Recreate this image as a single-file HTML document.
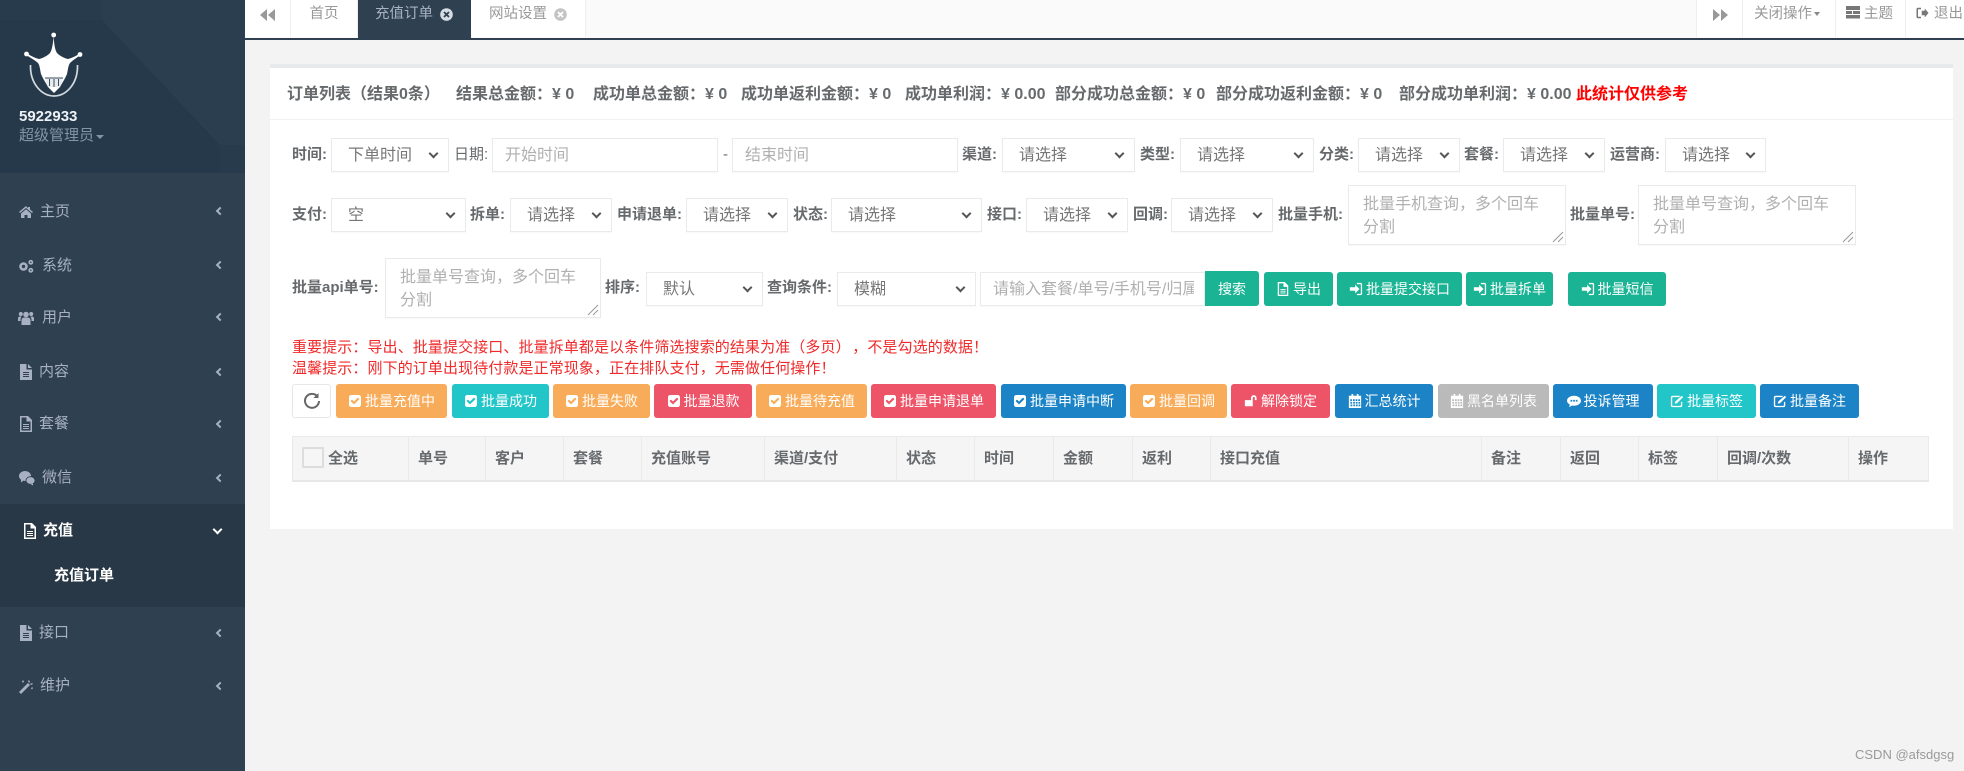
<!DOCTYPE html>
<html lang="zh"><head><meta charset="utf-8"><title>充值订单</title>
<style>
html,body{margin:0;padding:0;width:1964px;height:771px;overflow:hidden;background:#f3f3f4}
body{position:relative;font-family:"Liberation Sans","Noto Sans CJK SC",sans-serif;color:#676a6c}
.a,.l,.s,.i,.t,.b,.th,.m,.ar{position:absolute;white-space:nowrap;box-sizing:border-box}
.l{height:34px;line-height:34px;font-size:15px;font-weight:bold}
.s,.i,.t{background:#fff;border:1px solid #e9eaeb;box-shadow:0 1px 1px rgba(0,0,0,.03);height:34px;line-height:33px;font-size:16px;padding-left:16px;color:#777}
.s:after{content:"";position:absolute;right:11px;top:11px;width:5px;height:5px;border-right:2px solid #555;border-bottom:2px solid #555;transform:rotate(45deg)}
.i{color:#b0b0b0;padding-left:12px;overflow:hidden}
.t{height:60px;white-space:normal;color:#b0b0b0;line-height:23px;padding:7px 14px 0 14px}
.t svg{position:absolute;right:1px;bottom:1px}
.b{top:384px;height:34px;border-radius:3px;color:#fff;font-size:14px;display:flex;align-items:center;justify-content:center;gap:3px}
.b svg{width:14px;height:14px;fill:#fff;flex:none}
.or{background:#f8ac59}.te{background:#23c6c8}.re{background:#ed5468}.bl{background:#1c84c6}.gr{background:#bababa}.gn{background:#1ab394}
.th{top:436px;height:46px;line-height:44px;background:#f5f5f6;border:1px solid #eaeaea;border-left:0;border-bottom:2px solid #e7e7e7;font-size:15px;font-weight:bold;padding-left:9px}
.m{left:0;width:245px;height:30px;line-height:30px;font-size:15px;color:#a7b1c2}
.m svg.ic{position:absolute;left:18px;top:7px;width:16px;height:16px;fill:#a7b1c2}
.m span{position:absolute}
.ar{left:217px;width:6px;height:6px;border-left:2px solid #a7b1c2;border-bottom:2px solid #a7b1c2;transform:rotate(45deg)}
.tab{position:absolute;top:0;height:37px;line-height:29px;font-size:14.5px;color:#999;white-space:nowrap;box-sizing:border-box;text-align:center;border-right:1px solid #eee}
</style></head><body>
<svg width="0" height="0" style="position:absolute"><defs>
<symbol id="ck" viewBox="0 0 1792 1792"><path d="M813 1299l614-614q19-19 19-45t-19-45l-102-102q-19-19-45-19t-45 19l-467 467-211-211q-19-19-45-19t-45 19l-102 102q-19 19-19 45t19 45l358 358q19 19 45 19t45-19zm851-883v960q0 119-84.5 203.5t-203.5 84.5h-960q-119 0-203.5-84.5t-84.5-203.5v-960q0-119 84.5-203.5t203.5-84.5h960q119 0 203.5 84.5t84.5 203.5z"/></symbol>
<symbol id="cal" viewBox="0 0 16 16"><path d="M4 0h2v2h4V0h2v2h3v14H1V2h3zM2.500 6v2h2V6zm3.200 0v2h2V6zm3 0v2h2V6zm3 0v2h2V6zm-9 3v2h2V9zm3.200 0v2h2V9zm3 0v2h2V9zm3 0v2h2V9zm-9 3v2h2v-2zm3.200 0v2h2v-2zm3 0v2h2v-2zm3 0v2h2v-2z" fill-rule="evenodd"/></symbol>
<symbol id="ed" viewBox="0 0 16 16"><path d="M3 2h8v1.500H3.500a1 1 0 0 0-1 1v8a1 1 0 0 0 1 1h8a1 1 0 0 0 1-1V9H14v4a2 2 0 0 1-2 2H3a2 2 0 0 1-2-2V4a2 2 0 0 1 2-2zM13.500 2l1.500 1.500L8 10.500 5.500 11l.5-2.500z"/></symbol>
<symbol id="si" viewBox="0 0 16 16"><path d="M1 6h6V3l5 5-5 5v-3H1zM9 1h4a2 2 0 0 1 2 2v10a2 2 0 0 1-2 2H9v-1.500h4a.5.5 0 0 0 .5-.5V3a.5.5 0 0 0-.5-.5H9z"/></symbol>
<symbol id="fl" viewBox="0 0 16 16"><path fill-rule="evenodd" d="M2 0h8l4 4v12H2zm1.500 1.500v13h9V5.500H8.500v-4zM5 8h6v1H5zm0 2h6v1H5zm0 2h6v1H5z"/></symbol>
<symbol id="fs" viewBox="0 0 16 16"><path fill-rule="evenodd" d="M2 0h6.500v5.500H14V16H2zM5 8v1h6V8zm0 2v1h6v-1zm0 2v1h6v-1zM10 0l4 4h-4z"/></symbol>
</defs></svg>

<!-- sidebar -->
<div class="a" style="left:0;top:0;width:245px;height:771px;background:#2f4050"></div>
<svg class="a" style="left:0;top:0" width="245" height="173"><rect width="245" height="173" fill="#283b4c"/><polygon points="0,20 102,20 220,145 220,173 0,173" fill="#26394a"/><polygon points="102,0 245,0 245,145 220,145 102,20" fill="#2b3e4f"/></svg>
<svg class="a" style="left:0;top:0" width="110" height="105">
<path d="M30.500 65C30 84 42 96 54 96S78 84 77.500 65" fill="none" stroke="#d3dae0" stroke-width="1.700"/>
<path d="M53.700 36C54 44 55 50 57 53 60 56 64 58 68 59 72 58 76 56 79 54L80 55.500C76 58 72 61 70 63 68 66 68 70 67 74 65 79 62 83 60 87L54 93 48 87C46 83 43 79 41 74 40 70 40 66 38 63 36 61 31 58 27 55.500L28 54C31 56 35 58 39 59 43 58 47 56 50 53 52 50 53 44 53.700 36Z" fill="#fff"/>
<path d="M45 78H63L60 87H48Z" fill="#e8ecef"/>
<path d="M45 78H63M49.500 79V86M54 79V87M58.500 79V86" stroke="#3a4d5e" stroke-width="1" fill="none"/>
<circle cx="53.700" cy="35" r="2.400" fill="#fff"/><circle cx="26.500" cy="54" r="2.400" fill="#fff"/><circle cx="80" cy="54.500" r="2.400" fill="#fff"/>
</svg>
<div class="a" style="left:19px;top:107px;font-size:15px;font-weight:bold;color:#eef2f6;line-height:20px">5922933</div>
<div class="a" style="left:19px;top:126px;font-size:15px;color:#8095a8;line-height:20px">超级管理员</div>
<div class="a" style="left:96px;top:135px;border:4.500px solid transparent;border-top:4.500px solid #8095a8;border-bottom:0"></div>

<div class="m" style="top:197px"><svg class="ic" viewBox="0 0 16 16"><path d="M8 2 1 8l1 1 6-5 6 5 1-1-3-2.500V3h-2v1.200zM3 9.500V14h3.500v-3h3v3H13V9.500L8 5.300z"/></svg><span style="left:40px">主页</span></div><div class="ar" style="top:208px"></div>
<div class="m" style="top:251px"><svg class="ic" viewBox="0 0 16 16" style="fill:none;stroke:#a7b1c2"><circle cx="5.500" cy="8.500" r="3" stroke-width="2.600"/><circle cx="12.800" cy="4.300" r="1.600" stroke-width="1.700"/><circle cx="12.800" cy="12.300" r="1.600" stroke-width="1.700"/></svg><span style="left:42px">系统</span></div><div class="ar" style="top:262px"></div>
<div class="m" style="top:303px"><svg class="ic" viewBox="0 0 16 16"><circle cx="8" cy="4.500" r="2.800"/><circle cx="2.800" cy="4" r="2"/><circle cx="13.200" cy="4" r="2"/><path d="M3.500 15V10a3 3 0 0 1 3-2.500h3a3 3 0 0 1 3 2.500v5zM0 11V8.500A2 2 0 0 1 2 6.500h1.500L2.500 9v2zM16 11V8.500a2 2 0 0 0-2-2h-1.500l1 2.500v2z"/></svg><span style="left:42px">用户</span></div><div class="ar" style="top:314px"></div>
<div class="m" style="top:357px"><svg class="ic"><use href="#fs"/></svg><span style="left:39px">内容</span></div><div class="ar" style="top:369px"></div>
<div class="m" style="top:409px"><svg class="ic"><use href="#fl"/></svg><span style="left:39px">套餐</span></div><div class="ar" style="top:421px"></div>
<div class="m" style="top:463px"><svg class="ic" viewBox="0 0 16 16" style="width:18px"><ellipse cx="6" cy="6" rx="6" ry="5"/><path d="M2 9v3.500L5 10z"/><ellipse cx="11.500" cy="10.500" rx="4.500" ry="3.800" stroke="#2f4050" stroke-width=".8"/><path d="M14 13.500V15.500L11.500 14z"/></svg><span style="left:42px">微信</span></div><div class="ar" style="top:475px"></div>
<div class="a" style="left:0;top:504px;width:245px;height:103px;background:#293846"></div>
<div class="m" style="top:516px;color:#fff;font-weight:bold"><svg class="ic" style="left:22px;fill:#fff"><use href="#fl"/></svg><span style="left:43px">充值</span></div>
<div class="ar" style="left:214px;top:526px;width:7px;height:7px;border-color:#fff;transform:rotate(-45deg)"></div>
<div class="m" style="top:561px;color:#fff;font-weight:bold"><span style="left:54px">充值订单</span></div>
<div class="m" style="top:618px"><svg class="ic"><use href="#fs"/></svg><span style="left:39px">接口</span></div><div class="ar" style="top:630px"></div>
<div class="m" style="top:671px"><svg class="ic" viewBox="0 0 16 16"><path d="M1 14 10 5l2 2-9 9zM11 2l1 2-1 1-1-2zM14 5l1 1-2 1-1-1zM5 2l1 1.500L5 5 4 3.500zM14 9l1 1-1 1.500-1-1z"/></svg><span style="left:40px">维护</span></div><div class="ar" style="top:683px"></div>

<!-- top bar -->
<div class="a" style="left:245px;top:0;width:1719px;height:38px;background:#fafafa"></div>
<div class="a" style="left:245px;top:38px;width:1719px;height:2px;background:#2f4050"></div>
<div class="tab" style="left:245px;width:46px;background:#fff;border-right:1px solid #eee"><svg width="16" height="12" viewBox="0 0 16 12" style="margin-top:9px" fill="#999"><path d="M7 0V12L0 6zM15 0V12L8 6z"/></svg></div>
<div class="tab" style="left:291px;width:67px;background:#fff">首页</div>
<div class="tab" style="left:358px;width:113px;height:38px;background:#2f4050;color:#a7b1c2;border:0;text-align:left;padding-left:17px">充值订单<svg width="13" height="13" viewBox="0 0 13 13" style="position:absolute;left:82px;top:8px"><circle cx="6.500" cy="6.500" r="6.300" fill="#d5dbe2"/><path d="M4 4l5 5M9 4l-5 5" stroke="#2f4050" stroke-width="1.800"/></svg></div>
<div class="tab" style="left:471px;width:115px;background:#fff;text-align:left;padding-left:18px">网站设置<svg width="13" height="13" viewBox="0 0 13 13" style="position:absolute;left:83px;top:8px"><circle cx="6.500" cy="6.500" r="6.300" fill="#c4c4c4"/><path d="M4 4l5 5M9 4l-5 5" stroke="#fff" stroke-width="1.800"/></svg></div>
<div class="tab" style="left:1696px;width:47px;background:#fff;border-left:1px solid #eee"><svg width="16" height="12" viewBox="0 0 16 12" style="margin-top:9px" fill="#999"><path d="M1 0V12L8 6zM9 0V12L16 6z"/></svg></div>
<div class="tab" style="left:1743px;width:93px;background:#fff;text-align:left;padding-left:11px">关闭操作<span style="display:inline-block;border:3.500px solid transparent;border-top:4px solid #888;border-bottom:0;margin:0 0 2px 2px"></span></div>
<div class="tab" style="left:1836px;width:70px;background:#fff;text-align:left;padding-left:10px"><svg width="14" height="13" viewBox="0 0 14 13" fill="#777" style="vertical-align:-1px;margin-right:4px"><path d="M0 0h14v4H0zM0 5h6v3H0zM7 5h7v3H7zM0 9h14v3.500H0z"/></svg>主题</div>
<div class="tab" style="left:1906px;width:58px;background:#fff;text-align:left;padding-left:10px;border:0"><svg width="13" height="12" viewBox="0 0 16 16" fill="#777" style="vertical-align:-1px;margin-right:5px"><path d="M6 1H2a2 2 0 0 0-2 2v10a2 2 0 0 0 2 2h4v-2H2V3h4zM7 5h4V2l5 6-5 6v-3H7z"/></svg>退出</div>

<!-- card -->
<div class="a" style="left:270px;top:64px;width:1683px;height:465px;background:#fff;border-top:4px solid #e7eaec;box-sizing:border-box"></div>
<div class="a" style="left:270px;top:119px;width:1683px;height:1px;background:#f0f1f2"></div>
<div style="font-size:16px;font-weight:bold">
<div class="a" style="left:287px;top:80px">订单列表（结果0条）</div>
<div class="a" style="left:456px;top:80px">结果总金额：¥ 0</div>
<div class="a" style="left:593px;top:80px">成功单总金额：¥ 0</div>
<div class="a" style="left:741px;top:80px">成功单返利金额：¥ 0</div>
<div class="a" style="left:905px;top:80px">成功单利润：¥ 0.00</div>
<div class="a" style="left:1055px;top:80px">部分成功总金额：¥ 0</div>
<div class="a" style="left:1216px;top:80px">部分成功返利金额：¥ 0</div>
<div class="a" style="left:1399px;top:80px">部分成功单利润：¥ 0.00</div>
<div class="a" style="left:1576px;top:80px;color:#f00">此统计仅供参考</div>
</div>

<!-- row1 -->
<div class="l" style="left:292px;top:138px">时间:</div><div class="s" style="left:331px;top:138px;width:118px">下单时间</div>
<div class="l" style="left:454px;top:138px;font-weight:normal">日期:</div><div class="i" style="left:492px;top:138px;width:226px">开始时间</div>
<div class="l" style="left:723px;top:138px;font-weight:normal">-</div><div class="i" style="left:732px;top:138px;width:226px">结束时间</div>
<div class="l" style="left:962px;top:138px">渠道:</div><div class="s" style="left:1002px;top:138px;width:133px">请选择</div>
<div class="l" style="left:1140px;top:138px">类型:</div><div class="s" style="left:1180px;top:138px;width:134px">请选择</div>
<div class="l" style="left:1319px;top:138px">分类:</div><div class="s" style="left:1358px;top:138px;width:102px">请选择</div>
<div class="l" style="left:1464px;top:138px">套餐:</div><div class="s" style="left:1503px;top:138px;width:102px">请选择</div>
<div class="l" style="left:1610px;top:138px">运营商:</div><div class="s" style="left:1665px;top:138px;width:101px">请选择</div>
<!-- row2 -->
<div class="l" style="left:292px;top:198px">支付:</div><div class="s" style="left:331px;top:198px;width:135px">空</div>
<div class="l" style="left:470px;top:198px">拆单:</div><div class="s" style="left:510px;top:198px;width:102px">请选择</div>
<div class="l" style="left:617px;top:198px">申请退单:</div><div class="s" style="left:686px;top:198px;width:102px">请选择</div>
<div class="l" style="left:793px;top:198px">状态:</div><div class="s" style="left:831px;top:198px;width:151px">请选择</div>
<div class="l" style="left:987px;top:198px">接口:</div><div class="s" style="left:1026px;top:198px;width:102px">请选择</div>
<div class="l" style="left:1133px;top:198px">回调:</div><div class="s" style="left:1171px;top:198px;width:102px">请选择</div>
<div class="l" style="left:1278px;top:198px">批量手机:</div>
<div class="t" style="left:1348px;top:185px;width:218px">批量手机查询，多个回车分割<svg width="12" height="12" stroke="#999" fill="none"><path d="M1 11 11 1M6 11l5-5"/></svg></div>
<div class="l" style="left:1570px;top:198px">批量单号:</div>
<div class="t" style="left:1638px;top:185px;width:218px">批量单号查询，多个回车分割<svg width="12" height="12" stroke="#999" fill="none"><path d="M1 11 11 1M6 11l5-5"/></svg></div>
<!-- row3 -->
<div class="l" style="left:292px;top:271px">批量api单号:</div>
<div class="t" style="left:385px;top:258px;width:216px">批量单号查询，多个回车分割<svg width="12" height="12" stroke="#999" fill="none"><path d="M1 11 11 1M6 11l5-5"/></svg></div>
<div class="l" style="left:605px;top:271px">排序:</div><div class="s" style="left:646px;top:272px;width:117px">默认</div>
<div class="l" style="left:767px;top:271px">查询条件:</div><div class="s" style="left:837px;top:272px;width:139px">模糊</div>
<div class="i" style="left:980px;top:272px;width:225px"><div style="width:201px;overflow:hidden">请输入套餐/单号/手机号/归属地</div></div>
<div class="b gn" style="left:1205px;top:271px;width:54px;height:35px;border-radius:0 3px 3px 0">搜索</div>
<div class="b gn" style="left:1264px;top:272px;width:69px"><svg><use href="#fl"/></svg>导出</div>
<div class="b gn" style="left:1337px;top:272px;width:125px"><svg><use href="#si"/></svg>批量提交接口</div>
<div class="b gn" style="left:1466px;top:272px;width:87px"><svg><use href="#si"/></svg>批量拆单</div>
<div class="b gn" style="left:1568px;top:272px;width:98px"><svg><use href="#si"/></svg>批量短信</div>

<!-- tips -->
<div class="a" style="left:292px;top:337px;font-size:15px;line-height:21px;color:#f02a2a;letter-spacing:.1px">重要提示：导出、批量提交接口、批量拆单都是以条件筛选搜索的结果为准（多页）<span style="margin-left:9px">，不是勾选的数据！</span></div>
<div class="a" style="left:292px;top:358px;font-size:15px;line-height:21px;color:#f02a2a;letter-spacing:.1px">温馨提示：刚下的订单出现待付款是正常现象，正在排队支付，无需做任何操作！</div>

<!-- buttons -->
<div class="a" style="left:292px;top:384px;width:39px;height:34px;box-sizing:border-box;background:#fff;border:1px solid #e7e7e7;border-radius:3px"><svg width="18" height="18" viewBox="0 0 18 18" style="position:absolute;left:10px;top:7px" fill="none" stroke="#666" stroke-width="2"><path d="M14.500 4.500A7 7 0 1 0 16 9"/><path d="M15.500 1v5h-5" fill="#666" stroke="none"/></svg></div>
<div class="b or" style="left:336px;width:111px"><svg><use href="#ck"/></svg>批量充值中</div>
<div class="b te" style="left:452px;width:97px"><svg><use href="#ck"/></svg>批量成功</div>
<div class="b or" style="left:553px;width:97px"><svg><use href="#ck"/></svg>批量失败</div>
<div class="b re" style="left:654px;width:98px"><svg><use href="#ck"/></svg>批量退款</div>
<div class="b or" style="left:756px;width:111px"><svg><use href="#ck"/></svg>批量待充值</div>
<div class="b re" style="left:871px;width:125px"><svg><use href="#ck"/></svg>批量申请退单</div>
<div class="b bl" style="left:1001px;width:125px"><svg><use href="#ck"/></svg>批量申请中断</div>
<div class="b or" style="left:1130px;width:97px"><svg><use href="#ck"/></svg>批量回调</div>
<div class="b re" style="left:1231px;width:99px"><svg viewBox="0 0 16 16"><path d="M1 7h9v7H1zM8 7V4.500a3.200 3.200 0 0 1 6.400 0V7h-2V4.500a1.200 1.200 0 0 0-2.400 0V7z"/></svg>解除锁定</div>
<div class="b bl" style="left:1335px;width:98px"><svg><use href="#cal"/></svg>汇总统计</div>
<div class="b gr" style="left:1438px;width:111px"><svg><use href="#cal"/></svg>黑名单列表</div>
<div class="b bl" style="left:1553px;width:100px"><svg viewBox="0 0 16 16"><path fill-rule="evenodd" d="M8 2c4.400 0 8 2.500 8 5.700s-3.600 5.700-8 5.700c-.8 0-1.500-.1-2.200-.2L2.500 15l.7-3C1.200 11 0 9.500 0 7.700 0 4.500 3.600 2 8 2zM4 6.700v2h2v-2zm3 0v2h2v-2zm3 0v2h2v-2z"/></svg>投诉管理</div>
<div class="b te" style="left:1657px;width:99px"><svg><use href="#ed"/></svg>批量标签</div>
<div class="b bl" style="left:1760px;width:99px"><svg><use href="#ed"/></svg>批量备注</div>

<!-- table -->
<div class="th" style="left:292px;width:117px;border-left:1px solid #eaeaea;padding-left:35px">全选</div>
<div class="a" style="left:302px;top:447px;width:22px;height:21px;box-sizing:border-box;border:2px solid #ddd;background:#f6f6f6;border-radius:1px"></div>
<div class="th" style="left:409px;width:77px">单号</div>
<div class="th" style="left:486px;width:78px">客户</div>
<div class="th" style="left:564px;width:78px">套餐</div>
<div class="th" style="left:642px;width:123px">充值账号</div>
<div class="th" style="left:765px;width:132px">渠道/支付</div>
<div class="th" style="left:897px;width:78px">状态</div>
<div class="th" style="left:975px;width:79px">时间</div>
<div class="th" style="left:1054px;width:79px">金额</div>
<div class="th" style="left:1133px;width:78px">返利</div>
<div class="th" style="left:1211px;width:271px">接口充值</div>
<div class="th" style="left:1482px;width:79px">备注</div>
<div class="th" style="left:1561px;width:78px">返回</div>
<div class="th" style="left:1639px;width:79px">标签</div>
<div class="th" style="left:1718px;width:131px">回调/次数</div>
<div class="th" style="left:1849px;width:80px">操作</div>

<div class="a" style="left:1855px;top:747px;font-size:13px;line-height:16px;color:#9a9a9a">CSDN @afsdgsg</div>
</body></html>
